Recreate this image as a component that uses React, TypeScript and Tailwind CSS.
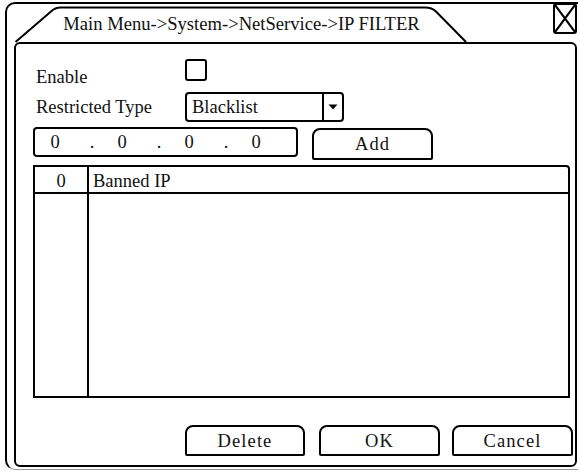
import React from 'react';

const serif = { fontFamily: '"Liberation Serif", "Times New Roman", serif' };

function TabShape() {
  return (
    <svg className="absolute inset-0 overflow-visible" width="455" height="38" viewBox="0 0 455 38" fill="none">
      <path
        d="M1.5 38 L37 7.5 Q41 3.5 47 3.5 L411 3.5 Q418 3.5 422 7.5 L452 38"
        stroke="#000"
        strokeWidth="2"
        strokeLinejoin="round"
      />
    </svg>
  );
}

function CloseBox() {
  return (
    <div className="ml-auto mr-[1px] -mt-[1px] w-[24px] h-[31px] border-2 border-black rounded-[3px] bg-white">
      <svg width="20" height="27" viewBox="0 0 20 27">
        <path d="M0 0 L20 27 M20 0 L0 27" stroke="#000" strokeWidth="2.2" />
      </svg>
    </div>
  );
}

function Btn({ label, className = '' }: { label: string; className?: string }) {
  return (
    <div
      className={`h-[31px] border-2 border-black rounded-t-[8px] rounded-b-[2px] flex items-center justify-center leading-[20px] text-[18.5px] tracking-[1.1px] ${className}`}
    >
      {label}
    </div>
  );
}

export default function App() {
  const ip = ['0', '0', '0', '0'];

  return (
    <div className="w-[580px] h-[472px] bg-white text-[#111] overflow-hidden" style={serif}>
      {/* outer frame */}
      <div className="mt-[2px] ml-[5px] w-[573px] h-[468px] border-l-2 border-t-2 border-b border-black border-b-[#9a9a9a] rounded-tl-[10px] rounded-bl-[10px] flex flex-col">
        {/* title tab + close */}
        <div className="h-[38px] flex items-start">
          <div className="ml-[7px] w-[455px] h-full relative">
            <TabShape />
            <div className="relative pt-[10px] text-center text-[18.6px] leading-[20px] whitespace-nowrap">
              {'Main Menu->System->NetService->IP FILTER'}
            </div>
          </div>
          <CloseBox />
        </div>

        {/* panel */}
        <div className="ml-[7px] mr-[1px] h-[425px] border-2 border-black rounded-[6px] flex flex-col text-[18.5px] leading-[20px]">
          {/* Enable */}
          <div className="mt-[15px] h-[22px] flex items-start pl-[20px]">
            <span className="w-[149px] mt-[8px]">Enable</span>
            <div className="w-[22px] h-[22px] border-2 border-black rounded-[3px]" />
          </div>

          {/* Restricted type */}
          <div className="mt-[11px] h-[30px] flex items-start pl-[20px]">
            <span className="w-[149px] mt-[5px] whitespace-nowrap">Restricted Type</span>
            <div className="w-[159px] h-[30px] border-2 border-black rounded-[4px] flex">
              <div className="flex-1 pl-[5px] pt-[3px]">Blacklist</div>
              <div className="w-[20px] border-l-2 border-black flex items-center justify-center">
                <svg width="10" height="6" viewBox="0 0 10 6">
                  <path d="M0.5 0.5 H9.5 L5 5.5 Z" fill="#000" />
                </svg>
              </div>
            </div>
          </div>

          {/* IP + Add */}
          <div className="mt-[5px] flex items-start pl-[17px]">
            <div className="w-[265px] h-[30px] border-2 border-black rounded-[4px] flex items-center">
              {ip.map((d, i) => (
                <React.Fragment key={i}>
                  {i > 0 && <span className="w-[20px] ml-[17px] text-center">.</span>}
                  <span className="w-[20px] ml-[10px] text-center">{d}</span>
                </React.Fragment>
              ))}
            </div>
            <div className="ml-[14px] mt-[1px] w-[121px] h-[32px] border-2 border-black rounded-t-[8px] rounded-b-[2px] flex items-center justify-center tracking-[1px]">
              Add
            </div>
          </div>

          {/* table */}
          <div className="mt-[5px] ml-[17px] w-[537px] h-[233px] border-2 border-black rounded-tr-[4px] grid grid-cols-[54px_1fr] grid-rows-[27px_1fr]">
            <div className="border-r-2 border-b-2 border-black text-center pt-[4px]">0</div>
            <div className="border-b-2 border-black pl-[4px] pt-[4px]">Banned IP</div>
            <div className="border-r-2 border-black" />
            <div />
          </div>

          {/* buttons */}
          <div className="mt-[27px] flex pl-[169px]">
            <Btn label="Delete" className="w-[120px]" />
            <Btn label="OK" className="w-[121px] ml-[14px]" />
            <Btn label="Cancel" className="w-[121px] ml-[12px]" />
          </div>
        </div>
      </div>
    </div>
  );
}
